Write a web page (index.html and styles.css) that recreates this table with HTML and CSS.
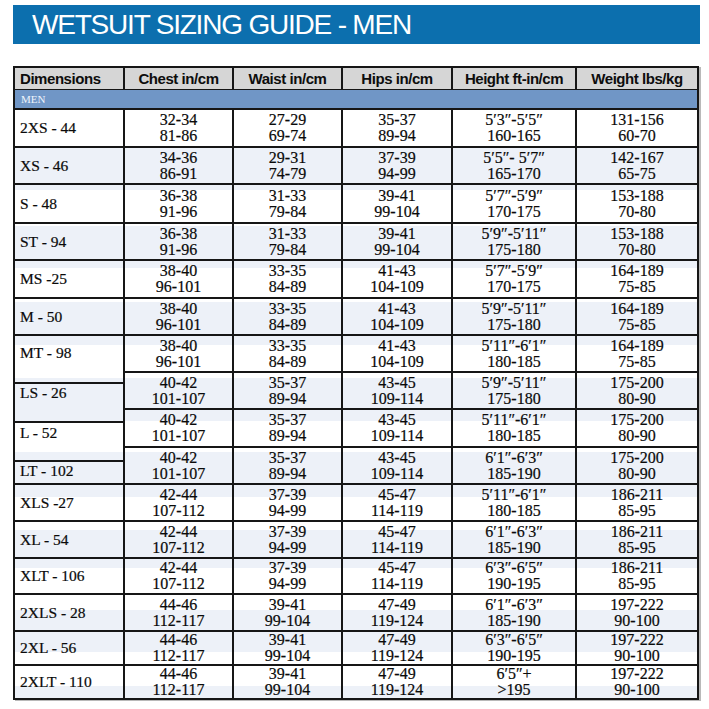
FILE: index.html
```html
<!DOCTYPE html>
<html lang="en">
<head>
<meta charset="utf-8">
<title>Wetsuit Sizing Guide - Men</title>
<link rel="stylesheet" href="styles.css">
</head>
<body>
<div class="page">
  <h1 class="banner">WETSUIT SIZING GUIDE - MEN</h1>

  <div class="table">
    <div class="row head">
      <div class="hc first">Dimensions</div>
      <div class="hc">Chest in/cm</div>
      <div class="hc">Waist in/cm</div>
      <div class="hc">Hips in/cm</div>
      <div class="hc">Height ft-in/cm</div>
      <div class="hc">Weight lbs/kg</div>
    </div>
    <div class="band">MEN</div>

    <div class="row h36">
      <div class="cell lab">2XS - 44</div>
      <div class="cell val">32-34<br>81-86</div>
      <div class="cell val">27-29<br>69-74</div>
      <div class="cell val">35-37<br>89-94</div>
      <div class="cell val">5′3″-5′5″<br>160-165</div>
      <div class="cell val">131-156<br>60-70</div>
    </div>
    <div class="row h35">
      <div class="cell lab">XS - 46</div>
      <div class="cell val">34-36<br>86-91</div>
      <div class="cell val">29-31<br>74-79</div>
      <div class="cell val">37-39<br>94-99</div>
      <div class="cell val">5′5″- 5′7″<br>165-170</div>
      <div class="cell val">142-167<br>65-75</div>
    </div>
    <div class="row h37">
      <div class="cell lab">S - 48</div>
      <div class="cell val">36-38<br>91-96</div>
      <div class="cell val">31-33<br>79-84</div>
      <div class="cell val">39-41<br>99-104</div>
      <div class="cell val">5′7″-5′9″<br>170-175</div>
      <div class="cell val">153-188<br>70-80</div>
    </div>
    <div class="row h35">
      <div class="cell lab">ST - 94</div>
      <div class="cell val">36-38<br>91-96</div>
      <div class="cell val">31-33<br>79-84</div>
      <div class="cell val">39-41<br>99-104</div>
      <div class="cell val">5′9″-5′11″<br>175-180</div>
      <div class="cell val">153-188<br>70-80</div>
    </div>
    <div class="row h36">
      <div class="cell lab">MS -25</div>
      <div class="cell val">38-40<br>96-101</div>
      <div class="cell val">33-35<br>84-89</div>
      <div class="cell val">41-43<br>104-109</div>
      <div class="cell val">5′7″-5′9″<br>170-175</div>
      <div class="cell val">164-189<br>75-85</div>
    </div>
    <div class="row h35">
      <div class="cell lab">M - 50</div>
      <div class="cell val">38-40<br>96-101</div>
      <div class="cell val">33-35<br>84-89</div>
      <div class="cell val">41-43<br>104-109</div>
      <div class="cell val">5′9″-5′11″<br>175-180</div>
      <div class="cell val">164-189<br>75-85</div>
    </div>

    <div class="block">
      <div class="labels">
        <div class="cell lab top l-mt">MT - 98</div>
        <div class="cell lab top l-ls">LS - 26</div>
        <div class="cell lab top l-l">L - 52</div>
        <div class="cell lab top l-lt">LT - 102</div>
      </div>
      <div class="block-grid">
        <div class="cell val">38-40<br>96-101</div>
        <div class="cell val">33-35<br>84-89</div>
        <div class="cell val">41-43<br>104-109</div>
        <div class="cell val">5′11″-6′1″<br>180-185</div>
        <div class="cell val">164-189<br>75-85</div>

        <div class="cell val">40-42<br>101-107</div>
        <div class="cell val">35-37<br>89-94</div>
        <div class="cell val">43-45<br>109-114</div>
        <div class="cell val">5′9″-5′11″<br>175-180</div>
        <div class="cell val">175-200<br>80-90</div>

        <div class="cell val">40-42<br>101-107</div>
        <div class="cell val">35-37<br>89-94</div>
        <div class="cell val">43-45<br>109-114</div>
        <div class="cell val">5′11″-6′1″<br>180-185</div>
        <div class="cell val">175-200<br>80-90</div>

        <div class="cell val">40-42<br>101-107</div>
        <div class="cell val">35-37<br>89-94</div>
        <div class="cell val">43-45<br>109-114</div>
        <div class="cell val">6′1″-6′3″<br>185-190</div>
        <div class="cell val">175-200<br>80-90</div>
      </div>
    </div>

    <div class="row h35">
      <div class="cell lab">XLS -27</div>
      <div class="cell val">42-44<br>107-112</div>
      <div class="cell val">37-39<br>94-99</div>
      <div class="cell val">45-47<br>114-119</div>
      <div class="cell val">5′11″-6′1″<br>180-185</div>
      <div class="cell val">186-211<br>85-95</div>
    </div>
    <div class="row h35">
      <div class="cell lab">XL - 54</div>
      <div class="cell val">42-44<br>107-112</div>
      <div class="cell val">37-39<br>94-99</div>
      <div class="cell val">45-47<br>114-119</div>
      <div class="cell val">6′1″-6′3″<br>185-190</div>
      <div class="cell val">186-211<br>85-95</div>
    </div>
    <div class="row h34">
      <div class="cell lab">XLT - 106</div>
      <div class="cell val">42-44<br>107-112</div>
      <div class="cell val">37-39<br>94-99</div>
      <div class="cell val">45-47<br>114-119</div>
      <div class="cell val">6′3″-6′5″<br>190-195</div>
      <div class="cell val">186-211<br>85-95</div>
    </div>
    <div class="row h35">
      <div class="cell lab">2XLS - 28</div>
      <div class="cell val">44-46<br>112-117</div>
      <div class="cell val">39-41<br>99-104</div>
      <div class="cell val">47-49<br>119-124</div>
      <div class="cell val">6′1″-6′3″<br>185-190</div>
      <div class="cell val">197-222<br>90-100</div>
    </div>
    <div class="row h32">
      <div class="cell lab">2XL - 56</div>
      <div class="cell val">44-46<br>112-117</div>
      <div class="cell val">39-41<br>99-104</div>
      <div class="cell val">47-49<br>119-124</div>
      <div class="cell val">6′3″-6′5″<br>190-195</div>
      <div class="cell val">197-222<br>90-100</div>
    </div>
    <div class="row h32">
      <div class="cell lab">2XLT - 110</div>
      <div class="cell val">44-46<br>112-117</div>
      <div class="cell val">39-41<br>99-104</div>
      <div class="cell val">47-49<br>119-124</div>
      <div class="cell val">6′5″+<br>&gt;195</div>
      <div class="cell val">197-222<br>90-100</div>
    </div>
  </div>
</div>
</body>
</html>
```

FILE: styles.css
```css
* { box-sizing: border-box; }

html, body {
  margin: 0;
  padding: 0;
  background: #ffffff;
}

.page {
  width: 709px;
  height: 709px;
  overflow: hidden;
  padding: 5px 9px 0 13px;
}

.banner {
  margin: 0;
  height: 39px;
  background: #0c6fae;
  color: #ffffff;
  font-family: "Liberation Sans", Arial, sans-serif;
  font-weight: normal;
  font-size: 28px;
  line-height: 40px;
  letter-spacing: -1.2px;
  padding-left: 19px;
  white-space: nowrap;
}

.table {
  margin-top: 22px;
  width: 686px;
  background: #161616;
  padding: 2px;
  display: flex;
  flex-direction: column;
  gap: 2px;
  box-shadow: 2px 1px 0 #b9b9b9;
}

.row {
  display: grid;
  grid-template-columns: 108px 107px 107px 108px 122px 120px;
  column-gap: 2px;
}

.h32 { height: 32px; }
.h34 { height: 34px; }
.h35 { height: 35px; }
.h36 { height: 36px; }
.h37 { height: 37px; }

.head { height: 20px; }

.hc {
  background: #d6d6d6;
  font-family: "Liberation Sans", Arial, sans-serif;
  font-weight: bold;
  font-size: 15px;
  line-height: 21px;
  color: #0d0d0d;
  text-align: center;
  white-space: nowrap;
  letter-spacing: -0.45px;
}

.hc.first {
  text-align: left;
  padding-left: 5px;
}

.band {
  height: 18px;
  background: #7096c6;
  color: #eef3fb;
  font-family: "Liberation Serif", "Times New Roman", serif;
  font-size: 11px;
  line-height: 18px;
  padding-left: 6px;
}

.cell {
  background: linear-gradient(to bottom,
    #ffffff 0, #ffffff 148px,
    #edf1f8 148px, #edf1f8 190px,
    #ffffff 190px, #ffffff 226px,
    #edf1f8 226px, #edf1f8 268px,
    #ffffff 268px, #ffffff 302px,
    #edf1f8 302px, #edf1f8 345px,
    #ffffff 345px, #ffffff 378px,
    #edf1f8 378px, #edf1f8 421px,
    #ffffff 421px, #ffffff 452px,
    #edf1f8 452px, #edf1f8 497px,
    #ffffff 497px, #ffffff 530px,
    #edf1f8 530px, #edf1f8 568px,
    #ffffff 568px, #ffffff 610px,
    #edf1f8 610px, #edf1f8 652px,
    #ffffff 652px, #ffffff 686px,
    #edf1f8 686px, #edf1f8 709px) fixed;
  color: #0a0a0a;
  font-family: "Liberation Serif", "Times New Roman", serif;
  -webkit-text-stroke: 0.2px #0a0a0a;
}

.val {
  display: flex;
  flex-direction: column;
  justify-content: center;
  align-items: center;
  text-align: center;
  font-size: 16px;
  line-height: 16px;
  white-space: nowrap;
}

.lab {
  display: flex;
  align-items: center;
  padding-left: 5px;
  font-size: 15.5px;
  line-height: 16px;
  white-space: nowrap;
}

.lab.top { align-items: flex-start; }

.block {
  display: flex;
  gap: 2px;
}

.labels {
  width: 108px;
  display: flex;
  flex-direction: column;
  gap: 2px;
}

.l-mt { height: 46px; padding-top: 9px; }
.l-ls { height: 37px; padding-top: 1px; }
.l-l  { height: 37px; padding-top: 2px; }
.l-lt { height: 21px; padding-top: 1px; }

.block-grid {
  display: grid;
  grid-template-columns: 107px 107px 108px 122px 120px;
  grid-template-rows: 35px 35px 36px 35px;
  gap: 2px;
}
```
